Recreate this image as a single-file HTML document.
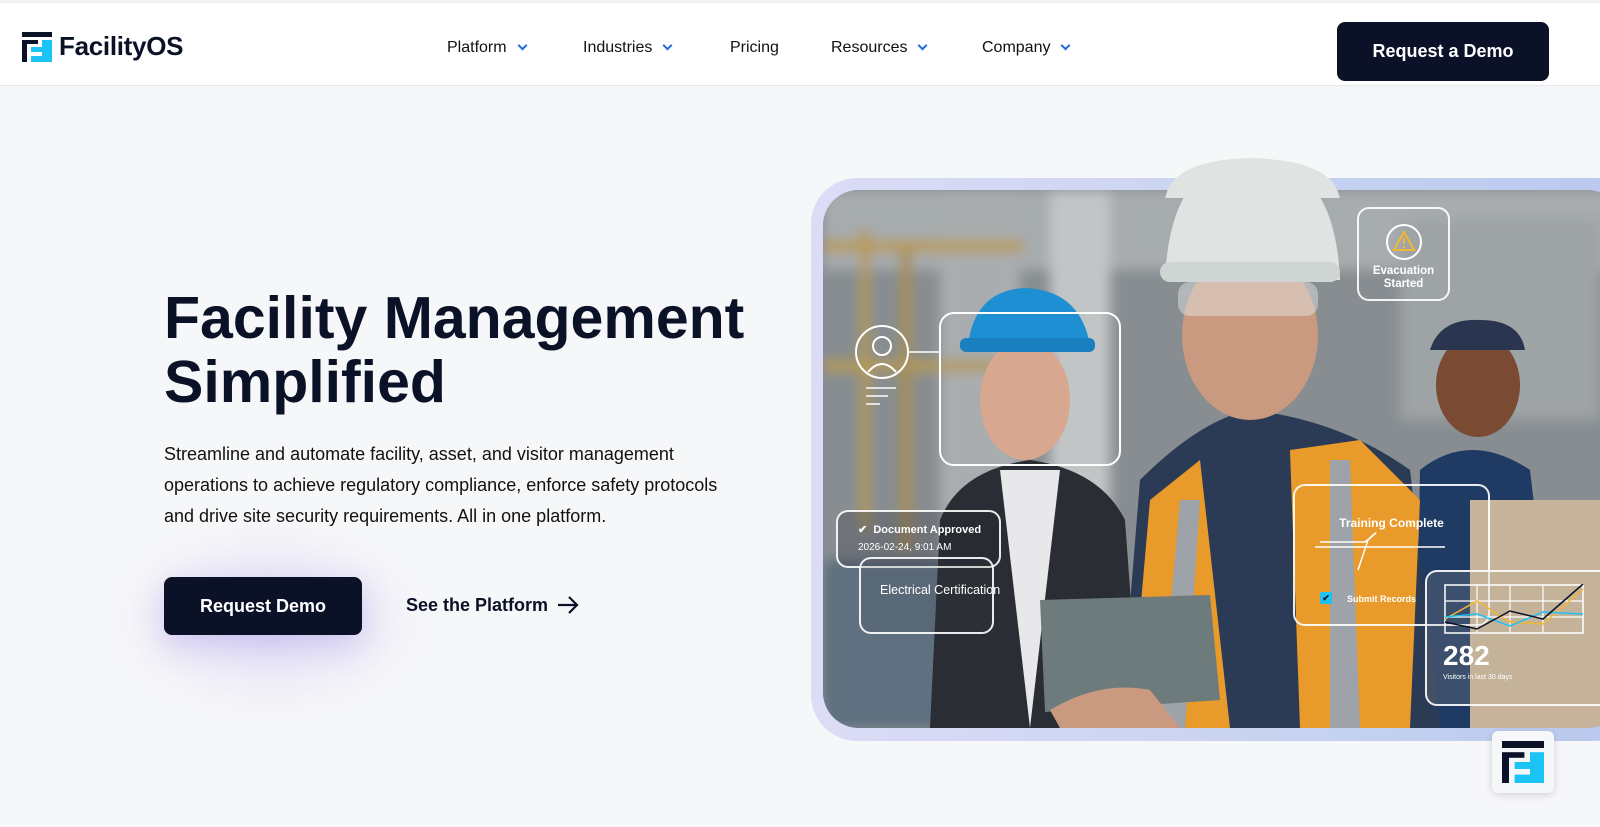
<!DOCTYPE html>
<html><head><meta charset="utf-8"><style>
*{margin:0;padding:0;box-sizing:border-box}
body{width:1600px;height:827px;overflow:hidden;background:#f6f7f9;font-family:"Liberation Sans",sans-serif;color:#0b1126;position:relative}
.hdr{position:absolute;left:0;top:0;width:1600px;height:86px;background:#fff;border-top:3px solid #f0f1f3;border-bottom:1px solid #e6e7ea}
.logo{position:absolute;left:22px;top:28px;display:flex;align-items:center}
.logo span{font-size:26px;font-weight:700;margin-left:7px;letter-spacing:-0.3px}
.nav{position:absolute;top:36px;font-size:16px;font-weight:500;color:#111}
.car{display:inline-block;width:7px;height:7px;border-right:2px solid #1e6fd9;border-bottom:2px solid #1e6fd9;transform:rotate(45deg);margin-left:12px;position:relative;top:-3px}
.btn{position:absolute;left:1337px;top:19px;width:212px;height:59px;background:#0b1126;border-radius:8px;color:#fff;font-weight:700;font-size:18px;display:flex;align-items:center;justify-content:center}
h1{position:absolute;left:164px;top:286px;font-size:59px;line-height:64px;font-weight:700;letter-spacing:0}
.p{position:absolute;left:164px;top:439px;font-size:18px;line-height:31px;color:#111;width:570px}
.glow{position:absolute;left:110px;top:520px;width:320px;height:200px;border-radius:50%;background:radial-gradient(ellipse,rgba(190,170,240,.35),rgba(246,247,249,0) 70%)}
.b2{position:absolute;left:164px;top:577px;width:198px;height:58px;background:#0b1126;border-radius:8px;color:#fff;font-weight:700;font-size:18px;display:flex;align-items:center;justify-content:center;box-shadow:0 10px 30px rgba(120,100,220,.25)}
.see{position:absolute;left:406px;top:595px;font-size:18px;font-weight:700}
.frame{position:absolute;left:811px;top:178px;width:830px;height:563px;border-radius:46px;background:linear-gradient(90deg,#dcdcf6,#c6d2f0 60%,#b9c8ee);}
.photo{position:absolute;left:823px;top:190px;width:800px;height:538px;border-radius:36px;overflow:hidden;background:#8c9296}
.badge{position:absolute;left:1492px;top:731px;width:62px;height:62px;background:#f6f7f9;border-radius:6px;box-shadow:0 2px 8px rgba(0,0,0,.15)}
.card{position:absolute;border:2px solid rgba(255,255,255,.9);border-radius:12px;color:#fff;font-weight:700}
</style></head><body>
<div class="hdr">
 <div class="logo"><svg width="30" height="30" viewBox="0 0 30 30"><rect x="0" y="0" width="30" height="5" fill="#0b1126"/><rect x="0" y="8" width="5" height="22" fill="#0b1126"/><rect x="5" y="8" width="11" height="4" fill="#0b1126"/><rect x="20" y="8" width="10" height="22" fill="#1cc3f5"/><rect x="9" y="15" width="11" height="5" fill="#1cc3f5"/><rect x="9" y="24" width="11" height="6" fill="#1cc3f5"/></svg><span>FacilityOS</span></div>
 <div class="nav" style="left:447px">Platform<i class="car"></i></div>
 <div class="nav" style="left:583px">Industries<i class="car"></i></div>
 <div class="nav" style="left:730px">Pricing</div>
 <div class="nav" style="left:831px">Resources<i class="car"></i></div>
 <div class="nav" style="left:982px">Company<i class="car"></i></div>
 <div class="btn">Request a Demo</div>
</div>
<h1>Facility Management<br>Simplified</h1>
<div class="p">Streamline and automate facility, asset, and visitor management operations to achieve regulatory compliance, enforce safety protocols and drive site security requirements. All in one platform.</div>
<div class="glow"></div>
<div class="b2">Request Demo</div>
<div class="see">See the Platform <svg width="22" height="18" viewBox="0 0 22 18" style="vertical-align:-3px;margin-left:4px"><path d="M1 9H20M12 1L20 9L12 17" stroke="#0b1126" stroke-width="2.2" fill="none"/></svg></div>
<div class="frame"></div>
<div class="photo">
<svg width="800" height="538" viewBox="823 190 800 538" style="position:absolute;left:0;top:0">
 <defs><filter id="bl"><feGaussianBlur stdDeviation="6"/></filter></defs>
 <rect x="823" y="190" width="800" height="538" fill="#878d91"/>
 <g filter="url(#bl)">
  <rect x="823" y="190" width="800" height="80" fill="#a7acae"/>
  <rect x="940" y="190" width="80" height="538" fill="#a9adaf"/>
  <rect x="1050" y="190" width="60" height="400" fill="#c2c5c6"/>
  <rect x="860" y="230" width="10" height="300" fill="#b49a5a"/>
  <rect x="823" y="240" width="200" height="12" fill="#b79b58"/>
  <rect x="823" y="360" width="220" height="12" fill="#b49a5a"/>
  <rect x="900" y="250" width="12" height="300" fill="#a8905a"/>
  <rect x="823" y="560" width="160" height="168" fill="#5f7080"/>
  <rect x="1400" y="220" width="200" height="200" fill="#9ea3a5"/>
 </g>
 <path d="M930 728 L940 520 Q960 470 1030 460 Q1100 470 1125 520 L1140 728Z" fill="#2a2d33"/>
 <path d="M1000 470 L1030 728 L1060 470Z" fill="#e8e8ea"/>
 <ellipse cx="1025" cy="400" rx="45" ry="60" fill="#d7a88f"/>
 <path d="M968 345 Q975 290 1025 288 Q1080 290 1090 345 Z" fill="#1e8fd2"/>
 <rect x="960" y="338" width="135" height="14" rx="6" fill="#1a7fbe"/>
 <path d="M1415 728 L1420 470 Q1470 430 1530 470 L1560 728Z" fill="#1f3a63"/>
 <ellipse cx="1478" cy="385" rx="42" ry="52" fill="#7a4a32"/>
 <path d="M1430 350 Q1440 318 1480 320 Q1520 320 1525 350Z" fill="#2a3550"/>
 <rect x="1470" y="500" width="130" height="228" fill="#c8b49a"/>
 <path d="M1120 728 L1140 480 Q1200 420 1250 410 Q1340 420 1410 470 L1440 728Z" fill="#2b3a55"/>
 <path d="M1130 728 L1150 500 L1200 460 L1230 728Z" fill="#e89a2a"/>
 <path d="M1300 728 L1290 450 L1360 440 L1420 500 L1410 728Z" fill="#e89a2a"/>
 <path d="M1160 728 L1180 500 L1200 500 L1185 728Z" fill="#9da3a8"/>
 <path d="M1330 728 L1330 460 L1350 460 L1360 728Z" fill="#9da3a8"/>
 <ellipse cx="1250" cy="335" rx="68" ry="85" fill="#c99a80"/>
 <path d="M1165 280 Q1170 160 1250 158 Q1335 160 1340 280Z" fill="#dfe4e2"/>
 <rect x="1160" y="262" width="180" height="20" rx="10" fill="#cfd5d3"/>
 <rect x="1178" y="282" width="140" height="34" rx="12" fill="rgba(230,235,235,.45)"/>
 <path d="M1040 600 L1210 595 L1220 700 L1045 712Z" fill="#6e7b7c"/>
 <path d="M1050 710 Q1100 680 1150 690 L1180 728 L1060 728Z" fill="#c99a80"/>
 <circle cx="882" cy="352" r="26" fill="none" stroke="#fff" stroke-width="2"/>
 <circle cx="882" cy="346" r="9" fill="none" stroke="#fff" stroke-width="2"/>
 <path d="M868 372 Q882 356 896 372" fill="none" stroke="#fff" stroke-width="2"/>
 <path d="M866 388H896M866 396H888M866 404H880" stroke="#fff" stroke-width="1.5"/>
 <path d="M908 352H940" stroke="#fff" stroke-width="1.5"/>
 <rect x="940" y="313" width="180" height="152" rx="14" fill="none" stroke="#fff" stroke-width="2"/>
 <path d="M1315 547H1445M1320 542H1365Q1385 525 1368 540 L1358 570" stroke="#fff" stroke-width="1.5" fill="none"/>
</svg>
<div class="card" style="left:534px;top:17px;width:93px;height:94px;text-align:center;font-size:11.5px;line-height:13px;padding-top:14px">
 <svg width="38" height="38" viewBox="0 0 38 38"><circle cx="19" cy="19" r="17" fill="none" stroke="#fff" stroke-width="2"/><path d="M19 9L29 27H9Z" fill="none" stroke="#f2b833" stroke-width="2"/><path d="M19 15V21M19 23V25" stroke="#f2b833" stroke-width="2"/></svg><br>Evacuation<br>Started</div>
<div class="card" style="left:36px;top:367px;width:135px;height:77px;z-index:1;background:rgba(60,60,70,.15)"></div>
<div class="card" style="left:13px;top:320px;width:165px;height:58px;font-size:11px;padding:10px 0 0 20px;line-height:17px;background:rgba(40,40,50,.25)">✔&nbsp; Document Approved<br><span style="font-weight:400;font-size:10px">2026-02-24, 9:01 AM</span></div>
<div style="position:absolute;left:57px;top:393px;color:#fff;font-size:12.5px;z-index:2">Electrical Certification</div>
<div class="card" style="left:470px;top:294px;width:197px;height:142px;font-size:12px;text-align:center;padding-top:30px">Training Complete
 <div style="position:absolute;left:25px;top:106px;width:12px;height:12px;background:#1cc3f5;border-radius:2px;color:#0b1126;font-size:9px;line-height:12px">✔</div>
 <div style="position:absolute;left:52px;top:108px;font-size:9px">Submit Records</div></div>
<div class="card" style="left:602px;top:380px;width:200px;height:136px;background:rgba(180,170,150,.2)">
 <svg width="140" height="50" viewBox="0 0 140 50" style="position:absolute;left:17px;top:12px"><rect x="1" y="1" width="138" height="48" fill="none" stroke="#fff" stroke-width="1.5"/><path d="M33 1V49M66 1V49M99 1V49M1 17H139M1 33H139" stroke="#fff" stroke-width="1.2"/><path d="M1 35L33 17L66 38L99 40L139 5" stroke="#f2b833" stroke-width="1.5" fill="none"/><path d="M1 33L33 30L66 42L99 28L139 30" stroke="#1cc3f5" stroke-width="1.5" fill="none"/><path d="M1 38L33 45L66 27L99 35L139 0" stroke="#0b1126" stroke-width="1.5" fill="none"/></svg>
 <div style="position:absolute;left:16px;top:68px;font-size:28px">282</div>
 <div style="position:absolute;left:16px;top:102px;font-size:7px;font-weight:400">Visitors in last 30 days</div></div>
</div>
<svg width="200" height="40" viewBox="1150 158 200 40" style="position:absolute;left:1150px;top:158px"><path d="M1165 200 Q1170 160 1250 158 Q1335 160 1340 200Z" fill="#dfe4e2"/></svg>
<div class="badge"><svg width="42" height="42" viewBox="0 0 30 30" style="position:absolute;left:10px;top:10px"><rect x="0" y="0" width="30" height="5" fill="#0b1126"/><rect x="0" y="8" width="5" height="22" fill="#0b1126"/><rect x="5" y="8" width="11" height="4" fill="#0b1126"/><rect x="20" y="8" width="10" height="22" fill="#1cc3f5"/><rect x="9" y="15" width="11" height="5" fill="#1cc3f5"/><rect x="9" y="24" width="11" height="6" fill="#1cc3f5"/></svg></div>
</body></html>
